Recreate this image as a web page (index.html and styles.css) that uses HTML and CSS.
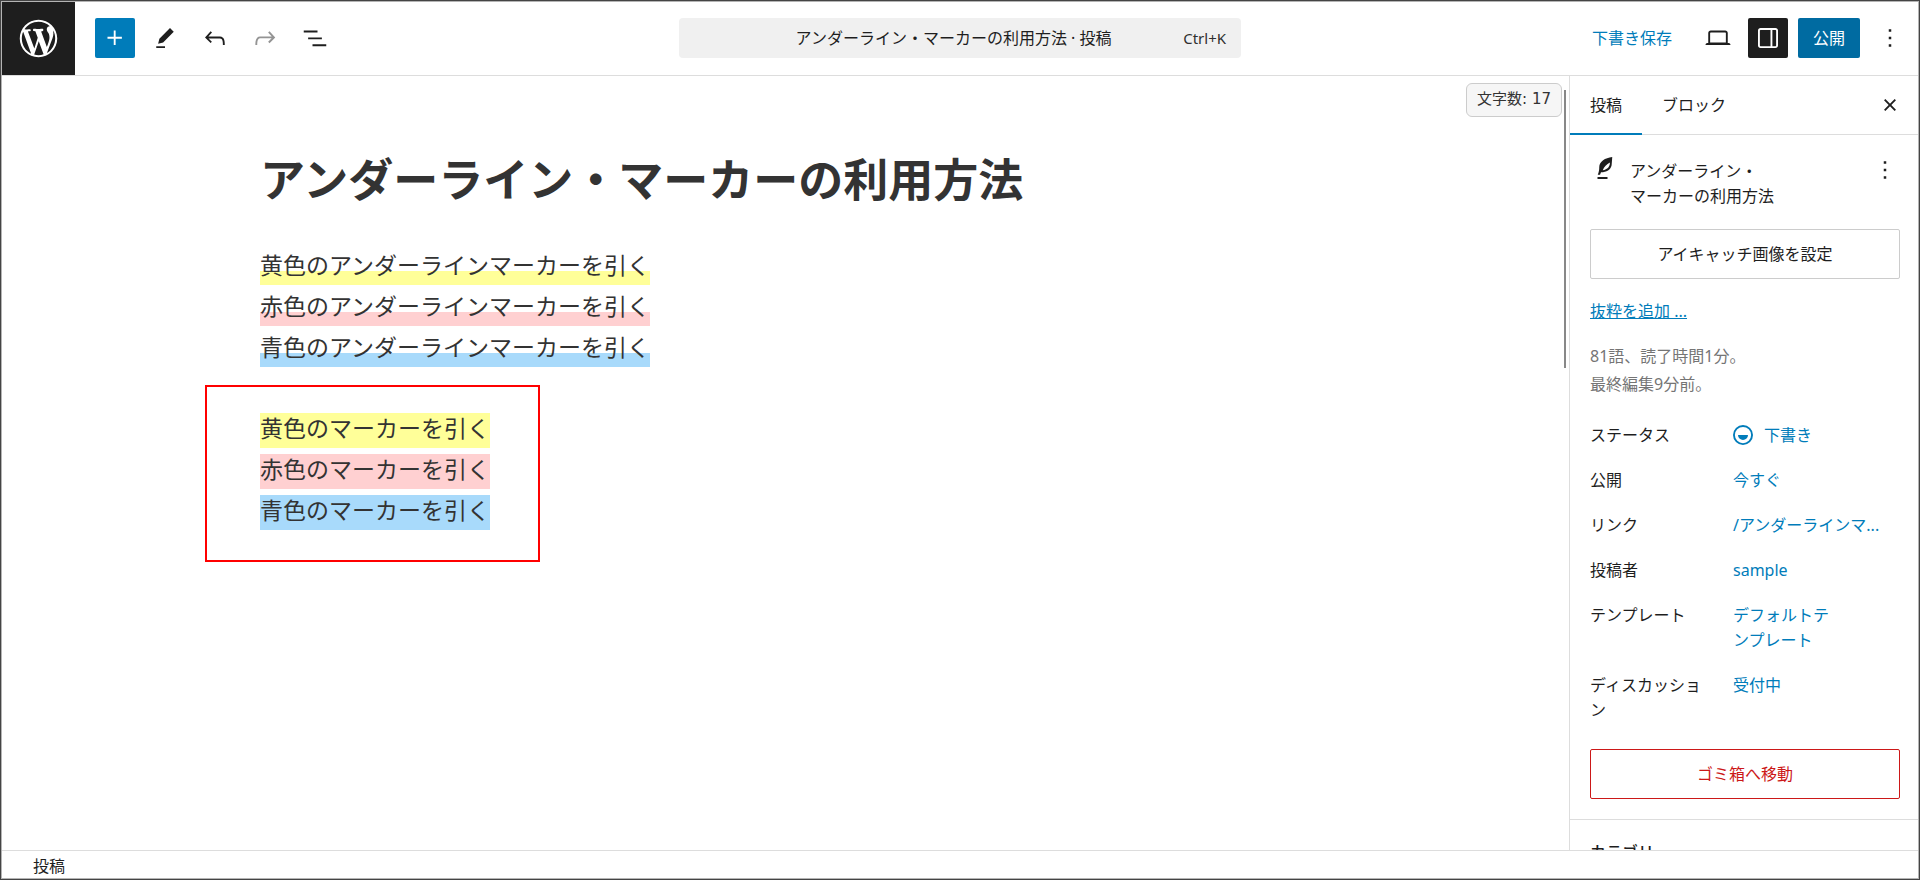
FILE: index.html
```html
<!DOCTYPE html>
<html lang="ja">
<head>
<meta charset="utf-8">
<title>アンダーライン・マーカーの利用方法 · 投稿</title>
<link rel="stylesheet" href="styles.css">
</head>
<body>
<div class="editor">
  <header class="header">
    <div class="header-start">
      <a class="logo" href="#" aria-label="投稿一覧を表示">
        <svg class="logo-icon" viewBox="-2 -2 24 24"><path d="M20 10c0-5.51-4.49-10-10-10C4.48 0 0 4.49 0 10c0 5.52 4.48 10 10 10 5.51 0 10-4.48 10-10zM7.78 15.37L4.37 6.22c.55-.02 1.17-.08 1.17-.08.5-.06.44-1.13-.06-1.11 0 0-1.45.11-2.37.11-.18 0-.37 0-.58-.01C4.12 2.69 6.87 1.11 10 1.11c2.33 0 4.45.87 6.05 2.34-.68-.11-1.65.39-1.65 1.58 0 .74.45 1.36.9 2.1.35.61.55 1.36.55 2.46 0 1.49-1.4 5-1.4 5l-3.03-8.37c.54-.02.82-.17.82-.17.5-.05.44-1.25-.06-1.22 0 0-1.44.12-2.38.12-.87 0-2.33-.12-2.33-.12-.5-.03-.56 1.2-.06 1.22l.92.08 1.26 3.41zM17.41 10c.24-.64.74-1.87.43-4.25.7 1.29 1.05 2.71 1.05 4.25 0 3.29-1.73 6.24-4.4 7.78.97-2.59 1.94-5.2 2.92-7.78zM6.1 18.09C3.12 16.65 1.11 13.53 1.11 10c0-1.3.23-2.48.72-3.59C3.25 10.3 4.67 14.2 6.1 18.09zm4.03-6.63l2.58 6.98c-.86.29-1.76.45-2.71.45-.79 0-1.57-.11-2.29-.33.81-2.38 1.62-4.74 2.42-7.1z"/></svg>
      </a>
      <div class="tools">
        <button class="icon-button primary" aria-label="ブロックを追加"><svg class="icon" viewBox="0 0 24 24"><path d="M11 12.5V17.5H12.5V12.5H17.5V11H12.5V6H11V11H6V12.5H11Z"/></svg></button>
        <button class="icon-button" aria-label="ツール"><svg class="icon" viewBox="0 0 24 24"><path d="m19 7-3-3-8.500 8.500-1 4 4-1L19 7Zm-7 11.500H5V20h7v-1.500Z"/></svg></button>
        <button class="icon-button" aria-label="元に戻す"><svg class="icon" viewBox="0 0 24 24"><path d="M18.3 11.7c-.6-.6-1.4-.9-2.300-.9H6.700l2.900-3.300-1.100-1-4.500 5L8.500 16l1-1-2.700-2.700H16c.5 0 .9.2 1.300.5 1 1 1 3.400 1 4.500v.3h1.500v-.2c0-1.500 0-4.300-1.500-5.700z"/></svg></button>
        <button class="icon-button" aria-label="やり直し" disabled><svg class="icon" viewBox="0 0 24 24"><path d="M15.600 6.500l-1.100 1 2.900 3.300H8c-.9 0-1.700.3-2.300.9-1.400 1.500-1.400 4.200-1.400 5.600v.2h1.500v-.3c0-1.100 0-3.500 1-4.500.3-.3.7-.5 1.300-.5h9.200L14.500 15l1.100 1.100 4.600-4.600-4.600-5z"/></svg></button>
        <button class="icon-button" aria-label="ドキュメント概観"><svg class="icon" viewBox="0 0 24 24"><path d="M3 6h11v1.500H3V6Zm3.500 5.500h11V13h-11v-1.500ZM21 17H10v1.500h11V17Z"/></svg></button>
      </div>
    </div>
    <button class="command">
      <span class="command-title">アンダーライン・マーカーの利用方法 · 投稿</span>
      <span class="command-key">Ctrl+K</span>
    </button>
    <div class="actions">
      <button class="save">下書き保存</button>
      <button class="icon-button" aria-label="表示"><svg class="icon" viewBox="0 0 24 24"><path d="M20.500 16h-.7V8c0-1.100-.9-2-2-2H6.200c-1.100 0-2 .9-2 2v8h-.7c-.8 0-1.500.7-1.500 1.500h20c0-.8-.7-1.500-1.500-1.500zM5.700 8c0-.3.2-.5.5-.5h11.600c.3 0 .5.2.5.5v7.600H5.700V8z"/></svg></button>
      <button class="icon-button pressed" aria-label="設定" aria-pressed="true"><svg class="icon" viewBox="0 0 24 24"><path d="M18 4H6c-1.100 0-2 .9-2 2v12c0 1.100.9 2 2 2h12c1.100 0 2-.9 2-2V6c0-1.100-.9-2-2-2zm-4 14.500H6c-.3 0-.5-.2-.5-.5V6c0-.3.2-.5.5-.5h8v13zm4.500-.5c0 .3-.2.5-.5.5h-2.500v-13H18c.3 0 .5.2.5.5v12z"/></svg></button>
      <button class="publish">公開</button>
      <button class="icon-button" aria-label="オプション"><svg class="icon" viewBox="0 0 24 24"><path d="M13 19h-2v-2h2v2zm0-6h-2v-2h2v2zm0-6h-2V5h2v2z"/></svg></button>
    </div>
  </header>

  <div class="body">
    <main class="canvas">
      <div class="word-count">文字数: 17</div>
      <div class="scroll-thumb"></div>
      <article class="post">
        <h1 class="post-title">アンダーライン・マーカーの利用方法</h1>
        <p class="text"><span class="line yellow">黄色のアンダーラインマーカーを引く</span><br><span class="line red">赤色のアンダーラインマーカーを引く</span><br><span class="line blue">青色のアンダーラインマーカーを引く</span></p>
        <p class="text framed"><span class="mark yellow">黄色のマーカーを引く</span><br><span class="mark red">赤色のマーカーを引く</span><br><span class="mark blue">青色のマーカーを引く</span></p>
      </article>
    </main>

    <aside class="sidebar">
      <div class="tabs">
        <button class="tab active">投稿</button>
        <button class="tab">ブロック</button>
        <button class="icon-button close" aria-label="設定を閉じる"><svg class="icon" viewBox="0 0 24 24"><path d="M12 13.060l3.712 3.713 1.061-1.060L13.061 12l3.712-3.712-1.060-1.060L12 10.938 8.288 7.227l-1.061 1.060L10.939 12l-3.712 3.712 1.060 1.061L12 13.061z"/></svg></button>
      </div>
      <section class="panel">
        <div class="card">
          <svg class="icon" viewBox="0 0 24 24"><path fill-rule="evenodd" d="M17.800 1.600C12 2.200 7.600 5.400 7.400 9.500c0 2-.2 4-1.200 6.300H8l.8-2c4.500 0 7.800-2 8.500-5.600.3-2.200.2-4.400.5-6.600zM15.900 6c.2 3.300-2 5.700-5.700 6.200C11.300 9.500 13.300 7.400 15.900 6zM6 17.600h8v1.600H6z"/></svg>
          <h2 class="card-title">アンダーライン・<br>マーカーの利用方法</h2>
          <button class="card-menu" aria-label="操作"><svg class="icon" viewBox="0 0 24 24"><path d="M13 19h-2v-2h2v2zm0-6h-2v-2h2v2zm0-6h-2V5h2v2z"/></svg></button>
        </div>
        <button class="wide-button">アイキャッチ画像を設定</button>
        <div class="summary">
          <a class="excerpt" href="#">抜粋を追加 ...</a>
          <p class="meta">81語、読了時間1分。<br>最終編集9分前。</p>
        </div>
        <dl class="rows">
          <div class="row"><dt class="label">ステータス</dt><dd class="value"><button class="value-button status"><svg class="icon status-icon" viewBox="0 0 24 24"><path fill-rule="evenodd" d="M12 18.500a6.500 6.500 0 1 1 0-13 6.500 6.500 0 0 1 0 13ZM4 12a8 8 0 1 1 16 0 8 8 0 0 1-16 0Zm8 4a4 4 0 0 0 4-4H8a4 4 0 0 0 4 4Z"/></svg>下書き</button></dd></div>
          <div class="row"><dt class="label">公開</dt><dd class="value"><button class="value-button">今すぐ</button></dd></div>
          <div class="row"><dt class="label">リンク</dt><dd class="value"><button class="value-button">/アンダーラインマ...</button></dd></div>
          <div class="row"><dt class="label">投稿者</dt><dd class="value"><button class="value-button">sample</button></dd></div>
          <div class="row"><dt class="label">テンプレート</dt><dd class="value"><button class="value-button">デフォルトテ<br>ンプレート</button></dd></div>
          <div class="row"><dt class="label">ディスカッション</dt><dd class="value"><button class="value-button">受付中</button></dd></div>
        </dl>
        <button class="wide-button danger">ゴミ箱へ移動</button>
      </section>
      <section class="panel">
        <h2 class="panel-title">カテゴリー</h2>
      </section>
    </aside>
  </div>

  <footer class="footer">投稿</footer>
</div>
</body>
</html>
```
FILE: styles.css
```css
* {
  box-sizing: border-box;
}

body {
  margin: 0;
  color: #1e1e1e;
  font: 16px/25px "Noto Sans", "Noto Sans CJK JP", sans-serif;
}

h1, h2, p, dl, dd {
  margin: 0;
}

button {
  padding: 0;
  border: 0;
  background: none;
  color: inherit;
  font: inherit;
}

.editor {
  position: relative;
  display: flex;
  flex-direction: column;
  height: 100vh;
  border: 1px solid #444;
  background: #fff;
}

.editor::after {
  content: "";
  position: absolute;
  inset: 0;
  border: 1px solid #b4b4b4;
  pointer-events: none;
}

.icon {
  display: block;
  flex: none;
  width: 30px;
  height: 30px;
  fill: currentColor;
}

.header {
  display: grid;
  grid-template-columns: 1fr minmax(240px, 562px) 1fr;
  align-items: center;
  flex: none;
  height: 75px;
  border-bottom: 1px solid #ddd;
}

.header-start {
  display: flex;
  align-items: center;
}

.logo {
  display: grid;
  place-items: center;
  width: 74px;
  height: 74px;
  background: #1e1e1e;
}

.logo-icon {
  width: 45px;
  height: 45px;
  fill: #fff;
}

.tools,
.actions {
  display: flex;
  gap: 10px;
}

.tools {
  padding-left: 20px;
}

.actions {
  justify-content: flex-end;
  padding-right: 9px;
}

.icon-button {
  display: grid;
  place-items: center;
  flex: none;
  width: 40px;
  height: 40px;
  border-radius: 2px;
}

.icon-button:disabled {
  color: #949494;
}

.primary {
  background: #007cba;
  color: #fff;
}

.pressed {
  background: #1e1e1e;
  color: #fff;
}

.command {
  display: flex;
  align-items: center;
  height: 40px;
  padding: 0 15px;
  border-radius: 4px;
  background: #f0f0f0;
}

.command-title {
  flex: 1;
  padding-left: 30px;
  text-align: center;
}

.command-key {
  color: #2f2f2f;
  font-size: 15px;
}

.save {
  padding: 0 16px;
  color: #007cba;
}

.publish {
  height: 40px;
  padding: 0 15px;
  border-radius: 2px;
  background: #006ba1;
  color: #fff;
}

.body {
  display: flex;
  flex: 1;
  min-height: 0;
}

.canvas {
  position: relative;
  flex: 1;
  min-width: 0;
  padding: 72px 20px 0;
}

.post {
  max-width: 1050px;
  margin: 0 auto;
  color: #333;
  font-family: "Noto Sans CJK JP", sans-serif;
}

.post-title {
  margin-bottom: 36px;
  font-size: 45px;
  line-height: 60px;
}

.text {
  width: fit-content;
  margin-bottom: 40px;
  font-size: 23px;
  line-height: 41px;
}

.yellow {
  --tint: #ffff99;
}

.red {
  --tint: #ffd0d1;
}

.blue {
  --tint: #a8dafb;
}

.line,
.mark {
  padding-bottom: 4px;
}

.line {
  background: linear-gradient(transparent 24px, var(--tint) 24px);
}

.mark {
  background: linear-gradient(transparent 3px, var(--tint) 3px);
}

.framed {
  position: relative;
}

.framed::after {
  content: "";
  position: absolute;
  inset: -22px -50px -32px -55px;
  border: 2px solid #f00;
}

.word-count {
  position: absolute;
  top: 7px;
  right: 7px;
  height: 34px;
  padding: 0 10px;
  border: 1px solid #ccc;
  border-radius: 6px;
  background: #f6f6f6;
  color: #333;
  font: 15px/30px "DejaVu Sans", "Noto Sans CJK JP", sans-serif;
}

.scroll-thumb {
  position: absolute;
  top: 14px;
  right: 3px;
  width: 2px;
  height: 278px;
  background: #888;
}

.sidebar {
  flex: none;
  width: 350px;
  overflow: hidden;
  border-left: 1px solid #ddd;
}

.tabs {
  display: flex;
  align-items: center;
  height: 59px;
  border-bottom: 1px solid #ddd;
}

.tab {
  height: 59px;
  padding: 0 20px;
}

.active {
  box-shadow: inset 0 -2px #007cba;
}

.close {
  margin: 0 9px 0 auto;
}

.panel {
  display: flex;
  flex-direction: column;
  gap: 20px;
  padding: 20px 19px 20px 20px;
  border-bottom: 1px solid #ddd;
}

.card {
  display: flex;
  gap: 10px;
}

.card-title {
  flex: 1;
  padding-top: 4px;
  font-size: 16px;
  font-weight: 400;
}

.card-menu {
  align-self: flex-start;
}

.wide-button {
  height: 50px;
  border: 1px solid #ccc;
  border-radius: 2px;
}

.danger {
  border-color: #cc1818;
  color: #cc1818;
}

.summary {
  display: flex;
  flex-direction: column;
  align-items: flex-start;
  gap: 18px;
}

.excerpt {
  color: #007cba;
}

.meta {
  color: #757575;
  line-height: 28px;
}

.rows {
  display: flex;
  flex-direction: column;
  gap: 9px;
}

.row {
  display: grid;
  grid-template-columns: 120px 1fr;
  gap: 23px;
}

.label,
.value-button {
  padding: 5px 0 6px;
}

.label {
  word-break: break-all;
}

.value-button {
  display: block;
  color: #007cba;
  text-align: left;
  white-space: nowrap;
}

.status {
  display: flex;
  align-items: center;
  gap: 6px;
}

.status-icon {
  margin: -3px 0 -2px -5px;
}

.panel-title {
  font-size: 16px;
  font-weight: 500;
}

.footer {
  flex: none;
  height: 29px;
  padding-left: 32px;
  border-top: 1px solid #ddd;
  line-height: 30px;
}
```
